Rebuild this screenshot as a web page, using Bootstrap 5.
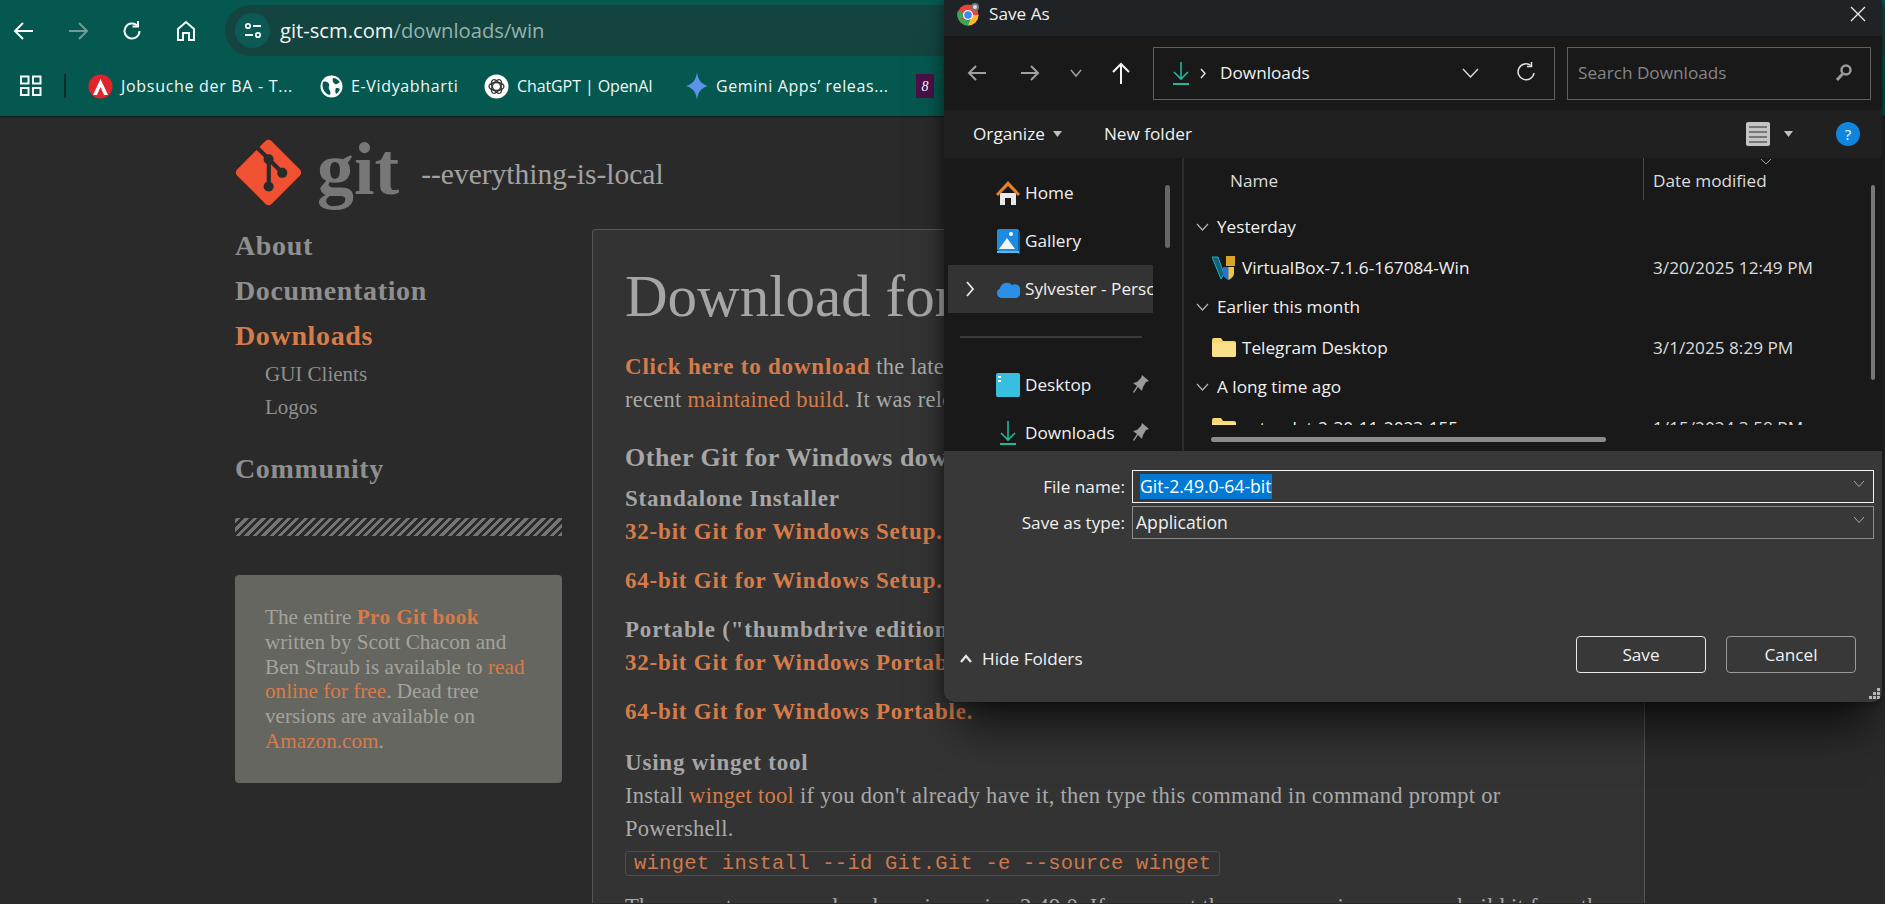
<!DOCTYPE html>
<html lang="en">
<head>
<meta charset="UTF-8">
<title>Download for Windows - Save As</title>
<link href="https://cdn.jsdelivr.net/npm/bootstrap@5.3.0/dist/css/bootstrap.min.css" rel="stylesheet">
<style>
    html, body { height: 904px; overflow: hidden; }
    body { background: #2a2a2a; color: #a9a9a9; font-family: "Liberation Serif", serif; position: relative; }
    svg { flex: none; }

    /* browser chrome */
    .chrome-bar { background: #05584f; height: 117px; border-bottom: 1px solid #0d1a18; font-family: "Open Sans", sans-serif; color: #f2f7f6; }
    .tool-row { height: 56px; padding-top: 5px; }
    .tool-btn { width: 54px; display: flex; justify-content: center; }
    .tool-btns { width: 225px; flex: none; padding-left: 0; margin-left: -3px; margin-right: 3px; }
    .omni { flex: 1; height: 51px; border-radius: 26px 0 0 26px; background: #14443f; padding-left: 10px; font-size: 20.2px; }
    .omni-icon { width: 35px; height: 35px; border-radius: 50%; background: #0c5a53; margin-right: 10px; }
    .omni-path { color: #93b3ae; }
    .mark-row { height: 60px; font-size: 16px; padding-left: 19px; }
    .mark-item { white-space: nowrap; }
    .mark-rule { width: 2px; height: 24px; margin: 0 22px 0 21px; background: #0d2b28; }
    .mark-job { width: 232px; letter-spacing: .7px; }
    .mark-globe { width: 164px; letter-spacing: .65px; }
    .mark-gpt { width: 202px; letter-spacing: -.1px; }
    .mark-gem { width: 230px; letter-spacing: .6px; }
    .mark-purple { width: 18px; height: 24px; background: #4a1049; font-size: 14px; font-style: italic; font-family: "Liberation Serif", serif; }

    /* site */
    .site-head { padding: 21px 0 0 234px; height: 106px; }
    .git-word { font-weight: 700; font-size: 74px; line-height: 70px; color: #777; margin-left: 14px; margin-top: -4px; }
    .git-tag { font-size: 29.5px; margin-left: 22px; margin-top: 14px; color: #a2a2a2; }
    .site-body { padding-left: 235px; }
    .side-col { width: 327px; flex: none; }
    .side-link { font-weight: 700; font-size: 28px; line-height: 45px; letter-spacing: .65px; color: #8f8f8f; }
    .side-link.active-link { color: #d67c4a; }
    .side-link.last-link { margin-top: 22px; }
    .side-sub { font-size: 21px; line-height: 33px; padding-left: 30px; color: #8f8f8f; }
    .stripes { height: 18px; margin-top: 27px; background: repeating-linear-gradient(-45deg, #757575 0 3px, #2a2a2a 3px 6px); }
    .book-box { background: #666660; border: 0; border-radius: 4px; height: 208px; margin-top: 39px; padding: 30px; font-size: 21.2px; line-height: 24.8px; color: #a3a39c; }
    .book-box b { letter-spacing: .4px; }
    .orange, .orange:hover { color: #d67c4a; text-decoration: none; }
    .main-box { width: 1053px; margin-left: 30px; margin-top: 6px; height: 674px; overflow: hidden; background: #333; border: 1px solid #565656; border-bottom: 0; border-radius: 4px 4px 0 0; padding: 35px 35px 0 32px; font-size: 22.5px; letter-spacing: .28px; line-height: 33px; flex: none; }
    .main-box h1 { font-size: 59px; line-height: 62px; font-weight: 400; letter-spacing: 0; color: #a6a6a6; margin: 0 0 23px; font-family: "Liberation Serif", serif; white-space: nowrap; }
    .main-box p { margin: 0; }
    .main-box .sect { font-size: 26px; font-weight: 700; letter-spacing: .5px; color: #a6a6a6; margin: 25px 0 8px; line-height: 33px; }
    .main-box b, .main-box .fw-bold { font-size: 23px; letter-spacing: .8px; font-weight: 700; }
    .main-box b { color: #a6a6a6; }
    .gap-top { margin-top: 16px !important; }
    .gap-wide { margin-top: 18px !important; }
    .code-line { display: block; width: fit-content; font-family: "Liberation Mono", monospace; font-size: 20.5px; line-height: 23px; color: #cb7a4c; border: 1px solid #4c4c4c; border-radius: 3px; padding: 0 8px; margin: 6px 0 14px; letter-spacing: .25px; white-space: nowrap; }
    .main-box .last-para { white-space: nowrap; }

    /* save dialog, sits over the page */
    .save-dlg { position: absolute; left: 944px; top: 0; width: 938px; height: 702px; background: #191919; border-radius: 0 0 10px 10px; box-shadow: 0 40px 40px -15px rgba(0,0,0,.62), 0 0 14px rgba(0,0,0,.5); font-family: "Open Sans", sans-serif; font-size: 17.2px; color: #f0f0f0; overflow: hidden; }
    .dlg-title { height: 36px; background: #1f2326; padding: 0 16px 9px 13px; }
    .dlg-nav { height: 74px; background: #191919; padding-left: 23px; }
    .nav-fwd { margin-left: 33px; }
    .nav-more { margin-left: 30px; }
    .nav-up { margin-left: 29px; }
    .path-box { width: 402px; height: 53px; border: 1px solid #5f5f5f; margin-left: 22px; padding: 0 17px; flex: none; }
    .path-name { margin-left: 13px; }
    .path-chev { margin-right: 36px; }
    .find-box { width: 304px; height: 53px; border: 1px solid #5f5f5f; margin-left: 12px; color: #858585; padding: 0 17px 0 10px; flex: none; }
    .dlg-cmd { height: 48px; background: #202020; padding: 0 22px 0 29px; }
    .cmd-new { margin-left: 42px; }
    .cmd-tri { margin-left: 14px; }
    .cmd-help { margin-left: 43px; }
    .dlg-panes { height: 293px; background: #191919; position: relative; }
    .nav-pane { width: 240px; border-right: 2px solid #2c2c2c; padding-top: 11px; overflow: hidden; flex: none; }
    .nav-row { height: 48px; padding-left: 52px; white-space: nowrap; position: relative; }
    .nav-row.sel { background: #333; margin: 0 29px 0 4px; padding-left: 48px; overflow: hidden; }
    .nav-name { margin-left: 5px; }
    .nav-arrow { position: absolute; left: 17px; top: 16px; }
    .nav-pin { position: absolute; right: 33px; top: 14px; }
    .nav-rule { height: 48px; display: flex; align-items: center; padding: 0 40px 0 16px; }
    .nav-rule div { height: 2px; width: 100%; background: #3a3a3a; }
    .list-pane { flex: 1; position: relative; }
    .list-clip { height: 267px; overflow: hidden; }
    .list-head { height: 50px; position: relative; align-items: flex-start; }
    .head-name { width: 459px; padding: 10px 0 0 46px; color: #dcdcdc; }
    .head-date { height: 42px; border-left: 1px solid #4a4a4a; padding: 10px 0 0 9px; color: #dcdcdc; }
    .head-chev { position: absolute; left: 576px; top: 0; }
    .row-line { height: 40px; white-space: nowrap; }
    .group-line { padding: 0 0 3px 12px; gap: 8px; }
    .file-line { padding-left: 28px; }
    .file-name { width: 441px; gap: 6px; }
    .date-col { color: #dcdcdc; }
    .vbar { position: absolute; background: #8b8b8b; border-radius: 3px; }
    .bar-nav { left: -19px; top: 27px; width: 5px; height: 63px; background: #666; }
    .bar-list { left: 687px; top: 27px; width: 4px; height: 195px; background: #777; }
    .bar-h { left: 27px; top: 279px; width: 395px; height: 5px; }
    .dlg-form { height: 251px; background: #383838; position: relative; padding-top: 19px; font-size: 17.6px; }
    .form-row { height: 33px; margin-bottom: 3px; }
    .form-lbl { width: 188px; text-align: right; padding-right: 7px; flex: none; font-size: 17.2px; }
    .form-field { width: 742px; height: 100%; border: 1px solid #8c8c8c; padding: 0 3px; position: relative; }
    .form-field.focused { border-color: #f4f4f4; padding-left: 7px; }
    .sel-text { background: #0078d4; color: #fff; height: 25px; display: inline-flex; align-items: center; }
    .field-chev { position: absolute; right: 8px; top: 9px; }
    .form-foot { position: absolute; left: 16px; right: 26px; bottom: 29px; }
    .hide-btn { gap: 10px; font-size: 17.2px; margin-top: 9px; }
    .dlg-btn { width: 130px; height: 37px; background: #383838; color: #f0f0f0; border: 1px solid #9a9a9a; border-radius: 4px; font-size: 17.2px; padding: 0; }
    .dlg-btn.primary-btn { border-color: #e8e8e8; margin-right: 20px; }
    .grip { position: absolute; right: 2px; bottom: 3px; }
</style>
</head>
<body>
    <!-- browser toolbar -->
    <div class="chrome-bar">
        <div class="tool-row d-flex align-items-center">
            <div class="d-flex align-items-center tool-btns">
                <div class="tool-btn"><svg width="24" height="24" viewBox="0 0 24 24" fill="none" stroke="#f4f8f7" stroke-width="2"><path d="M21 12H4M11 4l-8 8 8 8"/></svg></div>
                <div class="tool-btn"><svg width="24" height="24" viewBox="0 0 24 24" fill="none" stroke="#6f9c96" stroke-width="2"><path d="M3 12h17M13 4l8 8-8 8"/></svg></div>
                <div class="tool-btn"><svg width="24" height="24" viewBox="0 0 24 24" fill="none" stroke="#f4f8f7" stroke-width="2"><path d="M19.5 12a7.5 7.5 0 1 1-2.4-5.5"/><path d="M18 2v5.5h-5.5"/></svg></div>
                <div class="tool-btn"><svg width="24" height="24" viewBox="0 0 24 24" fill="none" stroke="#f4f8f7" stroke-width="2"><path d="M4 21V10l8-7 8 7v11h-5v-7H9v7z"/></svg></div>
            </div>
            <div class="omni d-flex align-items-center">
                <div class="omni-icon d-flex align-items-center justify-content-center">
                    <svg width="20" height="20" viewBox="0 0 20 20" fill="none" stroke="#f4f8f7" stroke-width="1.8"><circle cx="5" cy="5" r="2.2"/><path d="M10 5h8M2 14h8"/><circle cx="15" cy="14" r="2.2"/></svg>
                </div>
                <span>git-scm.com<span class="omni-path">/downloads/win</span></span>
            </div>
        </div>
        <div class="mark-row d-flex align-items-center">
            <svg width="24" height="22" viewBox="0 0 24 22" fill="none" stroke="#f4f8f7" stroke-width="2"><rect x="2" y="1.5" width="7.5" height="7"/><rect x="14" y="1.5" width="7.5" height="7"/><rect x="2" y="13" width="7.5" height="7"/><rect x="14" y="13" width="7.5" height="7"/></svg>
            <div class="mark-rule flex-shrink-0"></div>
            <div class="mark-item mark-job d-flex align-items-center">
                <svg width="25" height="25" viewBox="0 0 25 25" class="me-2"><circle cx="12.5" cy="12.5" r="12" fill="#e1232b"/><path d="M12.5 5 5 21h4l3.5-8 3.5 8h4z" fill="#fff"/></svg>Jobsuche der BA - T...
            </div>
            <div class="mark-item mark-globe d-flex align-items-center">
                <svg width="23" height="23" viewBox="0 0 23 23" class="me-2"><circle cx="11.5" cy="11.5" r="11" fill="#fff"/><path d="M3 7c3-1 5 0 6 2s-1 3 0 5 2 3 1 6C5 19 1 13 3 7zM13 3c3 0 5 2 7 4-2 1-3 3-5 2s-3-4-2-6zM16 13c2 0 3 0 4 1-1 2-2 4-4 5-1-2-1-4 0-6z" fill="#05584f"/></svg>E-Vidyabharti
            </div>
            <div class="mark-item mark-gpt d-flex align-items-center">
                <svg width="25" height="25" viewBox="0 0 25 25" class="me-2"><circle cx="12.5" cy="12.5" r="12" fill="#fff"/><g fill="none" stroke="#333" stroke-width="1.3"><ellipse cx="12.5" cy="12.5" rx="7.5" ry="4"/><ellipse cx="12.5" cy="12.5" rx="7.5" ry="4" transform="rotate(60 12.5 12.5)"/><ellipse cx="12.5" cy="12.5" rx="7.5" ry="4" transform="rotate(120 12.5 12.5)"/></g></svg>ChatGPT | OpenAI
            </div>
            <div class="mark-item mark-gem d-flex align-items-center">
                <svg width="22" height="28" viewBox="0 0 22 28" class="me-2"><path d="M11 0c1 8 4 12 11 14-7 2-10 6-11 14C10 20 7 16 0 14 7 12 10 8 11 0z" fill="#5b93e6"/></svg>Gemini Apps’ releas...
            </div>
            <div class="mark-purple d-flex align-items-center justify-content-center text-white">8</div>
        </div>
    </div>

    <!-- git-scm page -->
    <div class="site-head d-flex align-items-start">
        <svg width="69" height="69" viewBox="0 0 97 97"><path fill="#f05133" d="M92.71 44.408 52.591 4.291c-2.31-2.311-6.057-2.311-8.369 0l-8.33 8.332L46.459 23.19c2.456-.83 5.272-.273 7.229 1.685 1.969 1.97 2.521 4.81 1.67 7.275l10.186 10.185c2.465-.85 5.307-.3 7.275 1.671 2.75 2.75 2.75 7.206 0 9.958-2.752 2.751-7.208 2.751-9.961 0-2.068-2.07-2.58-5.11-1.531-7.658l-9.5-9.499v24.997c.67.332 1.303.774 1.861 1.332 2.75 2.75 2.75 7.206 0 9.959-2.75 2.749-7.209 2.749-9.957 0-2.75-2.754-2.75-7.21 0-9.959.68-.679 1.467-1.193 2.307-1.537v-25.23c-.84-.344-1.625-.853-2.307-1.537-2.083-2.082-2.584-5.14-1.516-7.698L31.798 16.715 4.288 44.222c-2.311 2.313-2.311 6.06 0 8.371l40.121 40.118c2.31 2.311 6.056 2.311 8.369 0L92.71 52.779c2.311-2.311 2.311-6.06 0-8.371z"/></svg>
        <div class="git-word">git</div>
        <div class="git-tag">--everything-is-local</div>
    </div>
    <div class="site-body d-flex">
        <div class="side-col">
            <div class="side-link">About</div>
            <div class="side-link">Documentation</div>
            <div class="side-link active-link">Downloads</div>
            <div class="side-sub">GUI Clients</div>
            <div class="side-sub">Logos</div>
            <div class="side-link last-link">Community</div>
            <div class="stripes"></div>
            <div class="book-box">The entire <a href="#" class="orange"><b>Pro Git book</b></a> written by Scott Chacon and Ben Straub is available to <a href="#" class="orange">read online for free</a>. Dead tree versions are available on <a href="#" class="orange">Amazon.com</a>.</div>
        </div>
        <div class="main-box">
            <h1>Download for Windows</h1>
            <p><a href="#" class="orange fw-bold">Click here to download</a> the latest<br>recent <a href="#" class="orange">maintained build</a>. It was released</p>
            <p class="sect">Other Git for Windows downloads</p>
            <p><b>Standalone Installer</b></p>
            <p><a href="#" class="orange fw-bold">32-bit Git for Windows Setup.</a></p>
            <p class="gap-top"><a href="#" class="orange fw-bold">64-bit Git for Windows Setup.</a></p>
            <p class="gap-top"><b>Portable ("thumbdrive edition")</b></p>
            <p><a href="#" class="orange fw-bold">32-bit Git for Windows Portable.</a></p>
            <p class="gap-top"><a href="#" class="orange fw-bold">64-bit Git for Windows Portable.</a></p>
            <p class="gap-wide"><b>Using winget tool</b></p>
            <p>Install <a href="#" class="orange">winget tool</a> if you don't already have it, then type this command in command prompt or<br>Powershell.</p>
            <div class="code-line">winget install --id Git.Git -e --source winget</div>
            <p class="last-para">The current source code release is version 2.49.0. If you want the newer version, you can build it from the</p>
        </div>
    </div>

    <!-- Save As dialog -->
    <div class="save-dlg d-flex flex-column">
        <div class="dlg-title d-flex align-items-center flex-shrink-0">
            <svg width="24" height="24" viewBox="0 0 24 24" class="me-2"><circle cx="11" cy="13" r="10.5" fill="#e8453c"/><path d="M11 13 1.8 18a10.5 10.5 0 0 1-1-9z" fill="#34a853"/><path d="M11 13v10.5A10.5 10.5 0 0 0 21.5 13z" fill="#f9bb2d"/><path d="M1.8 18A10.5 10.5 0 0 0 11 23.5L14 16z" fill="#34a853"/><circle cx="11" cy="13" r="5" fill="#fff"/><circle cx="11" cy="13" r="3.8" fill="#4285f4"/><circle cx="18" cy="5" r="4" fill="#777"/><circle cx="18" cy="5" r="2" fill="#ddd"/></svg>
            <span>Save As</span>
            <svg class="ms-auto" width="16" height="16" viewBox="0 0 16 16" stroke="#f0f0f0" stroke-width="1.3"><path d="M1 1l14 14M15 1 1 15"/></svg>
        </div>
        <div class="dlg-nav d-flex align-items-center flex-shrink-0">
            <svg width="20" height="20" viewBox="0 0 20 20" fill="none" stroke="#a0a0a0" stroke-width="2"><path d="M19 10H2M9 3l-7 7 7 7"/></svg>
            <svg class="nav-fwd" width="20" height="20" viewBox="0 0 20 20" fill="none" stroke="#a0a0a0" stroke-width="2"><path d="M1 10h17M11 3l7 7-7 7"/></svg>
            <svg class="nav-more" width="12" height="9" viewBox="0 0 12 9" fill="none" stroke="#a0a0a0" stroke-width="1.5"><path d="M1 1l5 6 5-6"/></svg>
            <svg class="nav-up" width="20" height="22" viewBox="0 0 20 22" fill="none" stroke="#f4f4f4" stroke-width="2"><path d="M10 22V2M2 10l8-8 8 8"/></svg>
            <div class="path-box d-flex align-items-center">
                <svg width="20" height="24" viewBox="0 0 20 24" fill="none" stroke="#1fb89a" stroke-width="1.6"><path d="M10 1v17M3 11l7 7 7-7"/><path d="M2 23h16" stroke-width="2"/></svg>
                <svg class="ms-2" width="8" height="11" viewBox="0 0 8 11" fill="none" stroke="#e8e8e8" stroke-width="1.4"><path d="M2 1l4 4.5-4 4.5"/></svg>
                <span class="path-name">Downloads</span>
                <svg class="ms-auto path-chev" width="17" height="11" viewBox="0 0 17 11" fill="none" stroke="#e0e0e0" stroke-width="1.3"><path d="M1 1l7.5 8L16 1"/></svg>
                <svg width="22" height="24" viewBox="0 0 22 24" fill="none" stroke="#e0e0e0" stroke-width="1.5"><path d="M19 12a8 8 0 1 1-3-7.5"/><path d="M16.5 1v4.5H12"/></svg>
            </div>
            <div class="find-box d-flex align-items-center justify-content-between">
                <span>Search Downloads</span>
                <svg width="18" height="20" viewBox="0 0 18 20" fill="none" stroke="#9a9a9a"><circle cx="11" cy="7" r="4.5" stroke-width="2.5"/><path d="M7.5 11 2 17" stroke-width="3"/></svg>
            </div>
        </div>
        <div class="dlg-cmd d-flex align-items-center flex-shrink-0">
            <span>Organize</span>
            <svg class="ms-2" width="9" height="6" viewBox="0 0 9 6"><path d="M0 0h9L4.5 6z" fill="#c0c0c0"/></svg>
            <span class="cmd-new">New folder</span>
            <svg class="ms-auto" width="24" height="24" viewBox="0 0 24 24"><rect width="24" height="24" rx="2" fill="#c4c4c4"/><path d="M3 5h18M3 10h18M3 15h18M3 20h18" stroke="#2a2a2a" stroke-width="1.2"/></svg>
            <svg class="cmd-tri" width="9" height="6" viewBox="0 0 9 6"><path d="M0 0h9L4.5 6z" fill="#c0c0c0"/></svg>
            <svg class="cmd-help" width="24" height="24" viewBox="0 0 24 24"><circle cx="12" cy="12" r="12" fill="#0f85dd"/><text x="12" y="17.5" text-anchor="middle" font-family="Open Sans, sans-serif" font-size="15" fill="#fff">?</text></svg>
        </div>
        <div class="dlg-panes d-flex flex-shrink-0">
            <div class="nav-pane">
                <div class="nav-row d-flex align-items-center">
                    <svg width="24" height="24" viewBox="0 0 24 24"><path d="M4 12h16v12h-5v-7H9v7H4z" fill="#e8e8e8"/><path d="M12 0 0 13l2 2L12 5l10 10 2-2z" fill="#e2802c"/></svg>
                    <span class="nav-name">Home</span>
                </div>
                <div class="nav-row d-flex align-items-center">
                    <svg width="24" height="25" viewBox="0 0 24 25"><rect x="1" width="22" height="22" rx="2" fill="#1d8ce0"/><rect x="22" y="3" width="2" height="22" fill="#0c5fa8"/><path d="M3 20l8-11 8 11z" fill="#f5f5f5"/><circle cx="15" cy="5" r="2" fill="#fff"/><path d="M1 22h22v2H1z" fill="#5fb4f0"/></svg>
                    <span class="nav-name">Gallery</span>
                </div>
                <div class="nav-row sel d-flex align-items-center">
                    <svg class="nav-arrow" width="10" height="16" viewBox="0 0 10 16" fill="none" stroke="#e8e8e8" stroke-width="1.8"><path d="M2 1l6 7-6 7"/></svg>
                    <svg width="24" height="17" viewBox="0 0 24 17"><path d="M5 17a5 5 0 0 1-1-9.5A7 7 0 0 1 16 4a5.5 5.5 0 0 1 8 6.5A5 5 0 0 1 20 17z" fill="#2b8fe6"/></svg>
                    <span class="nav-name">Sylvester - Personal</span>
                </div>
                <div class="nav-rule"><div></div></div>
                <div class="nav-row d-flex align-items-center">
                    <svg width="24" height="24" viewBox="0 0 24 24"><rect width="24" height="24" rx="2" fill="#23b2d8"/><rect width="24" height="24" rx="2" fill="#58d0e8" opacity=".4"/><rect x="2" y="3" width="3" height="2" fill="#fff"/><rect x="2" y="7" width="3" height="2" fill="#fff"/></svg>
                    <span class="nav-name">Desktop</span>
                    <svg class="nav-pin" width="16" height="20" viewBox="0 0 16 20"><path d="M9 0l7 6-3 1-3 5-1 4-4-4-4 6-1-1 4-6-4-3 4-1 4-4z" fill="#9a9a9a"/></svg>
                </div>
                <div class="nav-row d-flex align-items-center">
                    <svg width="24" height="24" viewBox="0 0 24 24" fill="none" stroke="#1fb89a" stroke-width="1.6"><path d="M12 0v19M5 12l7 7 7-7"/><path d="M4 23h16" stroke-width="2"/></svg>
                    <span class="nav-name">Downloads</span>
                    <svg class="nav-pin" width="16" height="20" viewBox="0 0 16 20"><path d="M9 0l7 6-3 1-3 5-1 4-4-4-4 6-1-1 4-6-4-3 4-1 4-4z" fill="#9a9a9a"/></svg>
                </div>
            </div>
            <div class="list-pane">
                <div class="list-clip">
                    <div class="list-head d-flex">
                        <span class="head-name">Name</span>
                        <span class="head-date">Date modified</span>
                        <svg class="head-chev" width="12" height="7" viewBox="0 0 12 7" fill="none" stroke="#999"><path d="M1 1l5 5 5-5"/></svg>
                    </div>
                    <div class="row-line group-line d-flex align-items-center">
                        <svg width="13" height="8" viewBox="0 0 13 8" fill="none" stroke="#b5b5b5" stroke-width="1.2"><path d="M1 1l5.5 6L12 1"/></svg><span>Yesterday</span>
                    </div>
                    <div class="row-line file-line d-flex align-items-center">
                        <div class="file-name d-flex align-items-center">
                            <svg width="24" height="24" viewBox="0 0 24 24"><path d="M0 1h6l6 17-3 5z" fill="#12627a" stroke="#1fb0c8"/><rect x="14" y="0" width="9" height="10" fill="#d9a32c"/><path d="M11 11h11v6c0 4-3 6-5.5 7C14 23 11 21 11 17z" fill="#2b6fd0"/><path d="M16.5 11H22v6c0 2-1 4-5.5 7z" fill="#f2c53a"/></svg>
                            <span>VirtualBox-7.1.6-167084-Win</span>
                        </div>
                        <span class="date-col">3/20/2025 12:49 PM</span>
                    </div>
                    <div class="row-line group-line d-flex align-items-center">
                        <svg width="13" height="8" viewBox="0 0 13 8" fill="none" stroke="#b5b5b5" stroke-width="1.2"><path d="M1 1l5.5 6L12 1"/></svg><span>Earlier this month</span>
                    </div>
                    <div class="row-line file-line d-flex align-items-center">
                        <div class="file-name d-flex align-items-center">
                            <svg width="24" height="19" viewBox="0 0 24 19"><path d="M0 2a2 2 0 0 1 2-2h7l2 3h11a2 2 0 0 1 2 2v12a2 2 0 0 1-2 2H2a2 2 0 0 1-2-2z" fill="#f7d774"/><path d="M0 5h24v12a2 2 0 0 1-2 2H2a2 2 0 0 1-2-2z" fill="#fbe08a"/></svg>
                            <span>Telegram Desktop</span>
                        </div>
                        <span class="date-col">3/1/2025 8:29 PM</span>
                    </div>
                    <div class="row-line group-line d-flex align-items-center">
                        <svg width="13" height="8" viewBox="0 0 13 8" fill="none" stroke="#b5b5b5" stroke-width="1.2"><path d="M1 1l5.5 6L12 1"/></svg><span>A long time ago</span>
                    </div>
                    <div class="row-line file-line d-flex align-items-center">
                        <div class="file-name d-flex align-items-center">
                            <svg width="24" height="19" viewBox="0 0 24 19"><path d="M0 2a2 2 0 0 1 2-2h7l2 3h11a2 2 0 0 1 2 2v12a2 2 0 0 1-2 2H2a2 2 0 0 1-2-2z" fill="#f7d774"/><path d="M0 5h24v12a2 2 0 0 1-2 2H2a2 2 0 0 1-2-2z" fill="#fbe08a"/></svg>
                            <span>setup-lat-2-30-11-2023-155</span>
                        </div>
                        <span class="date-col">1/15/2024 3:58 PM</span>
                    </div>
                </div>
                <div class="vbar bar-nav"></div>
                <div class="vbar bar-list"></div>
                <div class="vbar bar-h"></div>
            </div>
        </div>
        <div class="dlg-form flex-grow-1">
            <div class="form-row d-flex align-items-center">
                <div class="form-lbl">File name:</div>
                <div class="form-field focused d-flex align-items-center">
                    <span class="sel-text">Git-2.49.0-64-bit</span>
                    <svg class="field-chev" width="12" height="8" viewBox="0 0 12 8" fill="none" stroke="#aaa"><path d="M1 1l5 5.5L11 1"/></svg>
                </div>
            </div>
            <div class="form-row d-flex align-items-center">
                <div class="form-lbl">Save as type:</div>
                <div class="form-field d-flex align-items-center">
                    <span>Application</span>
                    <svg class="field-chev" width="12" height="8" viewBox="0 0 12 8" fill="none" stroke="#aaa"><path d="M1 1l5 5.5L11 1"/></svg>
                </div>
            </div>
            <div class="form-foot d-flex align-items-center">
                <div class="hide-btn d-flex align-items-center">
                    <svg width="12" height="9" viewBox="0 0 12 9" fill="none" stroke="#e8e8e8" stroke-width="2.2"><path d="M1 8l5-6 5 6"/></svg>
                    <span>Hide Folders</span>
                </div>
                <button type="button" class="btn dlg-btn primary-btn ms-auto">Save</button>
                <button type="button" class="btn dlg-btn">Cancel</button>
            </div>
            <svg class="grip" width="11" height="11" viewBox="0 0 11 11" fill="#b5b5b5"><rect x="8" y="0" width="3" height="3"/><rect x="4" y="4" width="3" height="3"/><rect x="8" y="4" width="3" height="3"/><rect x="0" y="8" width="3" height="3"/><rect x="4" y="8" width="3" height="3"/><rect x="8" y="8" width="3" height="3"/></svg>
        </div>
    </div>

    <script src="https://cdn.jsdelivr.net/npm/bootstrap@5.3.0/dist/js/bootstrap.bundle.min.js"></script>
</body>
</html>
